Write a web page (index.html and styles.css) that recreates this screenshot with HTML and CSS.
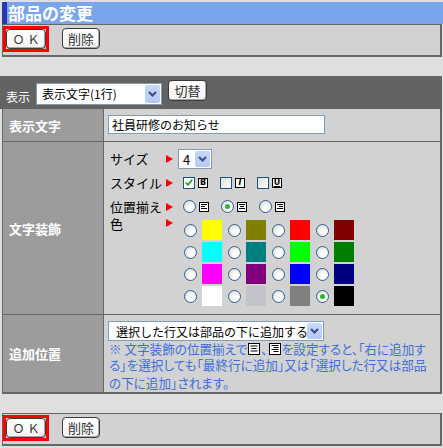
FILE: index.html
```html
<!DOCTYPE html>
<html lang="ja">
<head>
<meta charset="utf-8">
<title>部品の変更</title>
<link rel="stylesheet" href="styles.css">
</head>
<body>
<div class="title">部品の変更</div>
<div class="bar">
  <span class="okwrap"><span class="btn ok">ＯＫ</span></span>
  <span class="btn del">削除</span>
</div>

<div class="head">
  <span class="head-label">表示</span>
  <span class="select sel-view"><span class="sel-text">表示文字(1行)</span><span class="arrow"><svg width="9" height="6" viewBox="0 0 9 6"><path d="M1 1l3.5 3.5L8 1" fill="none" stroke="#3b4f7a" stroke-width="2"/></svg></span></span>
  <span class="btn switch">切替</span>
</div>

<div class="table">
  <div class="row r1">
    <div class="label">表示文字</div>
    <div class="cell c1"><div class="input">社員研修のお知らせ</div></div>
  </div>

  <div class="row r2">
    <div class="label">文字装飾</div>
    <div class="cell c2">
      <div class="deco">
        <span class="dl">サイズ</span><span class="tri"></span>
        <span class="select sel-size"><span class="sel-text">4</span><span class="arrow"><svg width="9" height="6" viewBox="0 0 9 6"><path d="M1 1l3.5 3.5L8 1" fill="none" stroke="#3b4f7a" stroke-width="2"/></svg></span></span>

        <span class="dl">スタイル</span><span class="tri"></span>
        <span class="opts">
          <span class="opt"><span class="cb checked"><svg width="11" height="11" viewBox="0 0 11 11"><path d="M2 5.5l2.3 2.5L9 2.5" fill="none" stroke="#22a322" stroke-width="2"/></svg></span><span class="fi fb">B</span></span>
          <span class="opt"><span class="cb"></span><span class="fi fit">I</span></span>
          <span class="opt"><span class="cb"></span><span class="fi fu">U</span></span>
        </span>

        <span class="dl">位置揃え</span><span class="tri"></span>
        <span class="opts">
          <span class="opt"><span class="rb"></span><svg class="ai" width="10" height="10" viewBox="0 0 10 10"><rect x="0.5" y="0.5" width="9" height="9" fill="#fff" stroke="#000"/><path d="M2 2.5h6M2 4.5h4M2 6.5h6" stroke="#000"/></svg></span>
          <span class="opt"><span class="rb on"></span><svg class="ai" width="10" height="10" viewBox="0 0 10 10"><rect x="0.5" y="0.5" width="9" height="9" fill="#fff" stroke="#000"/><path d="M2 2.5h6M3 4.5h4M2 6.5h6" stroke="#000"/></svg></span>
          <span class="opt"><span class="rb"></span><svg class="ai" width="10" height="10" viewBox="0 0 10 10"><rect x="0.5" y="0.5" width="9" height="9" fill="#fff" stroke="#000"/><path d="M2 2.5h6M4 4.5h4M2 6.5h6" stroke="#000"/></svg></span>
        </span>

        <span class="dl dl-color">色</span><span class="tri tri-color"></span>
        <span class="colors">
          <span class="co"><span class="rb"></span><span class="sw" style="background:#ffff00"></span></span>
          <span class="co"><span class="rb"></span><span class="sw" style="background:#808000"></span></span>
          <span class="co"><span class="rb"></span><span class="sw" style="background:#ff0000"></span></span>
          <span class="co"><span class="rb"></span><span class="sw" style="background:#800000"></span></span>
          <span class="co"><span class="rb"></span><span class="sw" style="background:#00ffff"></span></span>
          <span class="co"><span class="rb"></span><span class="sw" style="background:#008080"></span></span>
          <span class="co"><span class="rb"></span><span class="sw" style="background:#00ff00"></span></span>
          <span class="co"><span class="rb"></span><span class="sw" style="background:#008000"></span></span>
          <span class="co"><span class="rb"></span><span class="sw" style="background:#ff00ff"></span></span>
          <span class="co"><span class="rb"></span><span class="sw" style="background:#800080"></span></span>
          <span class="co"><span class="rb"></span><span class="sw" style="background:#0000ff"></span></span>
          <span class="co"><span class="rb"></span><span class="sw" style="background:#000080"></span></span>
          <span class="co"><span class="rb"></span><span class="sw" style="background:#ffffff"></span></span>
          <span class="co"><span class="rb"></span><span class="sw" style="background:#c3c3cb"></span></span>
          <span class="co"><span class="rb"></span><span class="sw" style="background:#808080"></span></span>
          <span class="co"><span class="rb on"></span><span class="sw" style="background:#000000"></span></span>
        </span>
      </div>
    </div>
  </div>

  <div class="row r3">
    <div class="label">追加位置</div>
    <div class="cell c3">
      <span class="select sel-pos"><span class="sel-text">選択した行又は部品の下に追加する</span><span class="arrow"><svg width="9" height="6" viewBox="0 0 9 6"><path d="M1 1l3.5 3.5L8 1" fill="none" stroke="#3b4f7a" stroke-width="2"/></svg></span></span>
      <div class="note">
        <div class="nl">※ 文字装飾の位置揃えで<svg class="ni" width="12" height="12" viewBox="0 0 12 12"><rect x="0.5" y="0.5" width="11" height="11" fill="#fff" stroke="#000"/><path d="M2.5 3h7M3.5 5.5h5M2.5 8h7" stroke="#000"/></svg>、<svg class="ni" width="12" height="12" viewBox="0 0 12 12"><rect x="0.5" y="0.5" width="11" height="11" fill="#fff" stroke="#000"/><path d="M2.5 2.5h7M4.5 4.5h5M2.5 6.5h7M4.5 8.5h5" stroke="#000"/></svg>を設定すると、「右に追加す</div>
        <div class="nl">る」を選択しても「最終行に追加」又は「選択した行又は部品</div>
        <div class="nl nl3">の下に追加」されます。</div>
      </div>
    </div>
  </div>
</div>

<div class="bar bar-bottom">
  <span class="okwrap"><span class="btn ok">ＯＫ</span></span>
  <span class="btn del">削除</span>
</div>
</body>
</html>
```

FILE: styles.css
```css
* { box-sizing: border-box; }

html, body {
  margin: 0;
  padding: 0;
}

body {
  width: 443px;
  height: 448px;
  overflow: hidden;
  background: #dfdfdf;
  font-family: "Noto Sans CJK JP", "Liberation Sans", sans-serif;
  font-size: 12px;
  color: #000;
}

/* title */
.title {
  margin: 2px 0 0 2px;
  height: 22px;
  background: #7aa5ec;
  border-left: 5px solid #2b38b2;
  color: #fff;
  font-size: 17px;
  font-weight: bold;
  line-height: 22px;
  padding-left: 1px;
}

/* button bars */
.bar {
  margin-left: 2px;
  width: 440px;
  height: 33px;
  background: #d2d2d2;
  border: 1px solid #666;
  border-right-width: 2px;
  border-bottom-width: 2px;
  display: flex;
  align-items: flex-start;
  padding-top: 1px;
}

.bar-bottom {
  margin-top: 19px;
}

.okwrap {
  width: 46px;
  height: 26px;
  border: 3px solid #ff0000;
  display: flex;
}

.btn {
  display: inline-flex;
  align-items: center;
  justify-content: center;
  height: 21px;
  background: linear-gradient(#ffffff, #f3f3f3);
  border: 1px solid #3a3a3a;
  border-radius: 4px;
  box-shadow: inset -1px -1px 0 #a8a8a8;
  color: #333;
  font-size: 13px;
  line-height: 1;
}

.ok {
  width: 40px;
  height: 20px;
  font-size: 12px;
  letter-spacing: 3px;
  padding-left: 3px;
}

.del {
  width: 38px;
  margin-left: 13px;
  margin-top: 2px;
}

/* header band */
.head {
  margin-top: 19px;
  width: 442px;
  height: 33px;
  background: #636363;
  display: flex;
  align-items: flex-start;
}

.head-label {
  margin: 14px 0 0 6px;
  color: #fff;
  font-size: 12px;
  line-height: 14px;
}

.select {
  display: inline-flex;
  align-items: stretch;
  background: #fff;
  border: 1px solid #7f9db9;
  padding: 1px;
}

.sel-text {
  flex: 1;
  font-size: 12px;
  line-height: 18px;
  padding-left: 4px;
  white-space: nowrap;
  overflow: hidden;
}

.arrow {
  width: 15px;
  flex: none;
  display: flex;
  align-items: center;
  justify-content: center;
  background: linear-gradient(#c8d8fc, #b3c8f5);
  border-radius: 2px;
}

.sel-view {
  margin: 7px 0 0 6px;
  width: 126px;
  height: 22px;
}

.switch {
  margin: 4px 0 0 6px;
  width: 39px;
  font-size: 13px;
}

/* table */
.table {
  margin-left: 2px;
  width: 440px;
  border-left: 1px solid #666;
  border-right: 2px solid #666;
  border-bottom: 2px solid #666;
}

.row {
  display: grid;
  grid-template-columns: 101px 1fr;
}

.row + .row {
  border-top: 1px solid #666;
}

.r1 { height: 32px; }
.r2 { height: 173px; }
.r3 { height: 78px; }

.label {
  background: #9c9c9c;
  border-right: 1px solid #666;
  color: #fff;
  font-weight: bold;
  font-size: 13px;
  display: flex;
  align-items: center;
  padding-left: 6px;
}

.cell {
  background: #d2d2d2;
}

.c1 {
  padding: 6px 0 0 4px;
}

.input {
  width: 217px;
  height: 19px;
  background: #fff;
  border: 1px solid #7f9db9;
  font-size: 12px;
  line-height: 17px;
  padding-left: 3px;
}

/* decoration block */
.c2 {
  padding: 6px 0 0 6px;
}

.deco {
  display: grid;
  grid-template-columns: 56px 12px auto;
  grid-template-rows: 21px 21px 21px auto;
  row-gap: 3px;
  align-items: center;
}

.dl {
  font-size: 13px;
  line-height: 16px;
  white-space: nowrap;
}

.tri {
  width: 0;
  height: 0;
  border-top: 4px solid transparent;
  border-bottom: 4px solid transparent;
  border-left: 7px solid #ff0000;
}

.dl-color {
  align-self: start;
  margin-top: -4px;
}

.tri-color {
  align-self: start;
  margin-top: -1px;
}

.sel-size {
  width: 34px;
  height: 20px;
  justify-self: start;
}

.sel-size .sel-text {
  padding-left: 3px;
  font-size: 13px;
  overflow: visible;
}

.opts {
  display: flex;
  align-items: center;
  padding-left: 5px;
}

.opt {
  display: inline-flex;
  align-items: center;
  gap: 3px;
  margin-right: 12px;
}

.cb {
  width: 12px;
  height: 12px;
  border: 1px solid #1c5180;
  background: linear-gradient(135deg, #dcdcd6, #ffffff);
  display: inline-flex;
  align-items: center;
  justify-content: center;
}

.cb.checked {
  background: #fff;
}

.fi {
  width: 10px;
  height: 10px;
  border: 1px solid #000;
  background: #fff;
  font-family: "DejaVu Sans", sans-serif;
  font-weight: bold;
  font-size: 8px;
  line-height: 8px;
  text-align: center;
  display: inline-block;
}

.fit {
  font-style: italic;
}

.fu {
  text-decoration: underline;
}

.rb {
  position: relative;
  width: 13px;
  height: 13px;
  border-radius: 50%;
  border: 1px solid #2d5f93;
  background: radial-gradient(circle at 65% 65%, #ffffff 25%, #d6d6cf 95%);
  display: inline-block;
  flex: none;
}

.rb.on::after {
  content: "";
  position: absolute;
  left: 3px;
  top: 3px;
  width: 5px;
  height: 5px;
  border-radius: 50%;
  background: #2fb52f;
}

.ai {
  display: block;
}

.colors {
  display: grid;
  grid-template-columns: repeat(4, 44px);
  grid-auto-rows: 22px;
  padding-left: 6px;
  align-self: start;
}

.co {
  display: flex;
  align-items: flex-start;
  gap: 5px;
}

.co .rb {
  margin-top: 4px;
}

.sw {
  width: 20px;
  height: 20px;
  display: block;
}

/* position row */
.c3 {
  padding: 6px 0 0 4px;
}

.sel-pos {
  width: 216px;
  height: 20px;
}

.sel-pos .sel-text {
  padding-left: 6px;
}

.note {
  color: #3d6fdb;
  font-size: 12.6px;
  font-feature-settings: "palt";
  white-space: nowrap;
  padding-left: 1px;
}

.nl {
  height: 16px;
  line-height: 16px;
}

.nl3 {
  margin-top: 2px;
}

.ni {
  vertical-align: -1px;
  margin: 0 1px;
}
```
